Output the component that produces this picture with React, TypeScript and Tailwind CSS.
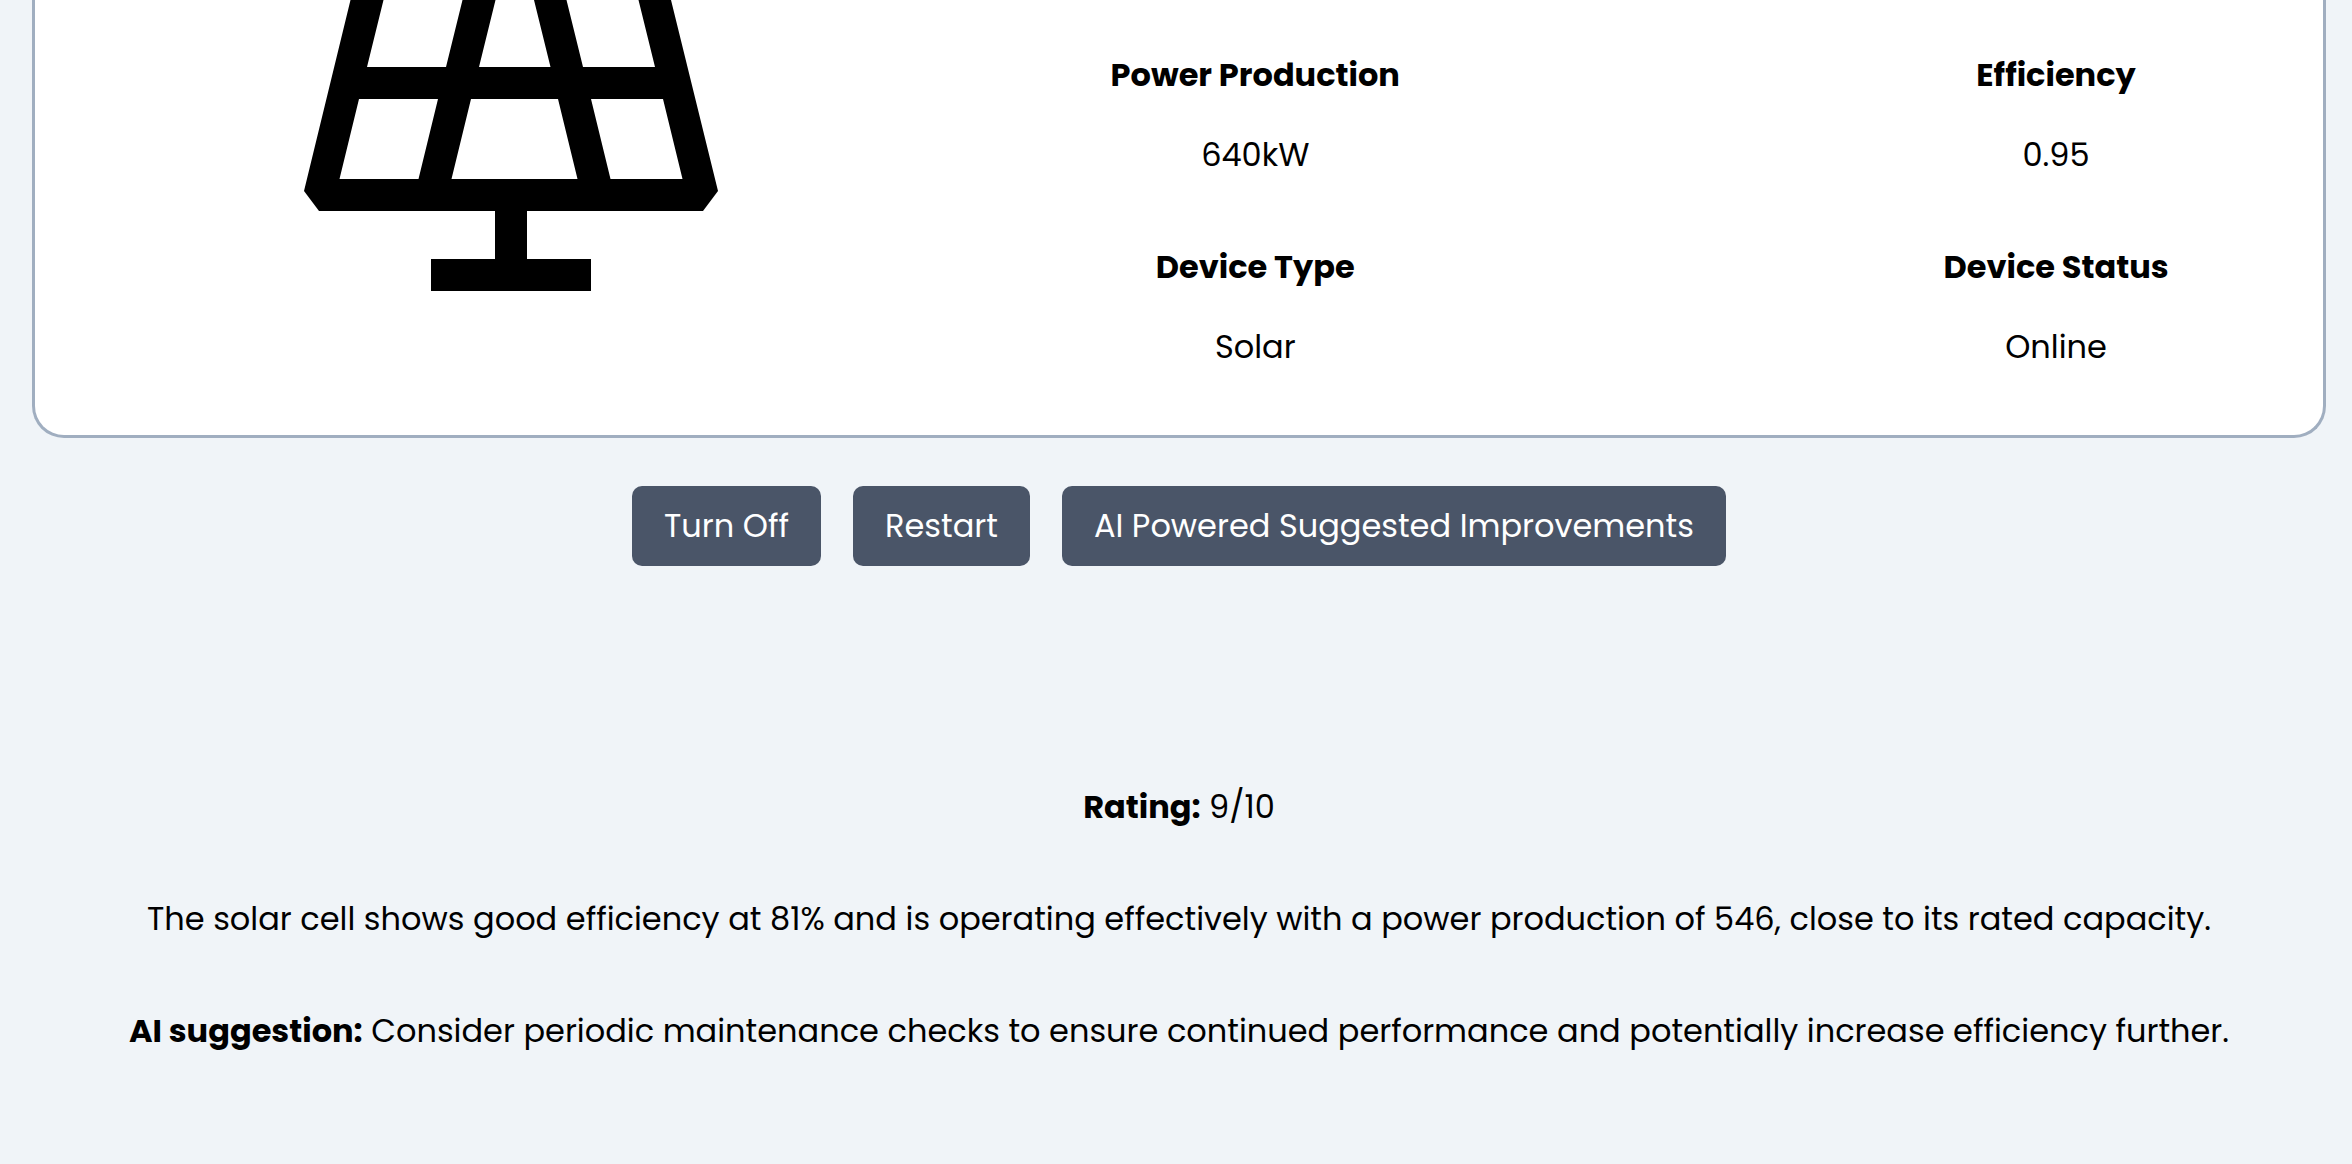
import React from "react";

const FACTS = [
  { label: "Power Production", value: "640kW" },
  { label: "Efficiency", value: "0.95" },
  { label: "Device Type", value: "Solar" },
  { label: "Device Status", value: "Online" },
];

const ACTIONS = ["Turn Off", "Restart", "AI Powered Suggested Improvements"];

function SolarPanelIcon() {
  return (
    <svg
      viewBox="304 0 414 291"
      className="w-[414px] max-w-full"
      fill="black"
      role="img"
      aria-label="Solar panel"
    >
      <path
        fillRule="evenodd"
        d="M350.500 0H671L718 191L703 211H527V259H591V291H431V259H495V211H319L304 191Z
           M383.500 0H462.500L446 67H367Z
           M495.500 0H534L550.500 67H479Z
           M566.500 0H638.500L655 67H583Z
           M359 99H438L418.500 179H339.500Z
           M471 99H558L577.500 179H451.500Z
           M591 99H663L682.500 179H610.500Z"
      />
    </svg>
  );
}

export default function App() {
  return (
    <main className="min-h-screen bg-[#f0f4f8] pr-[26px] pl-8 font-['Poppins','Inter',sans-serif] text-[32px] leading-[48px] font-normal text-black">
      <section className="flex rounded-b-[32px] border-x-3 border-b-3 border-[#a0aec0] bg-white">
        <div className="flex w-5/12 items-start justify-center pr-0.5">
          <SolarPanelIcon />
        </div>
        <dl className="flex w-7/12 flex-wrap justify-between gap-y-16 pt-[51px] pb-16">
          {FACTS.map((fact) => (
            <div key={fact.label} className="flex w-2/5 flex-col gap-8 text-center">
              <dt className="font-bold">{fact.label}</dt>
              <dd>{fact.value}</dd>
            </div>
          ))}
        </dl>
      </section>

      <div className="mt-12 flex flex-wrap justify-center gap-8">
        {ACTIONS.map((action) => (
          <button
            key={action}
            type="button"
            className="rounded-[10px] bg-[#4a5568] px-8 py-4 text-white"
          >
            {action}
          </button>
        ))}
      </div>

      <section className="mt-[217px] flex flex-col gap-16 text-center">
        <p>
          <strong className="font-bold">Rating:</strong> 9/10
        </p>
        <p>
          The solar cell shows good efficiency at 81% and is operating effectively with a power
          production of 546, close to its rated capacity.
        </p>
        <p>
          <strong className="font-bold">AI suggestion:</strong> Consider periodic maintenance checks
          to ensure continued performance and potentially increase efficiency further.
        </p>
      </section>
    </main>
  );
}
